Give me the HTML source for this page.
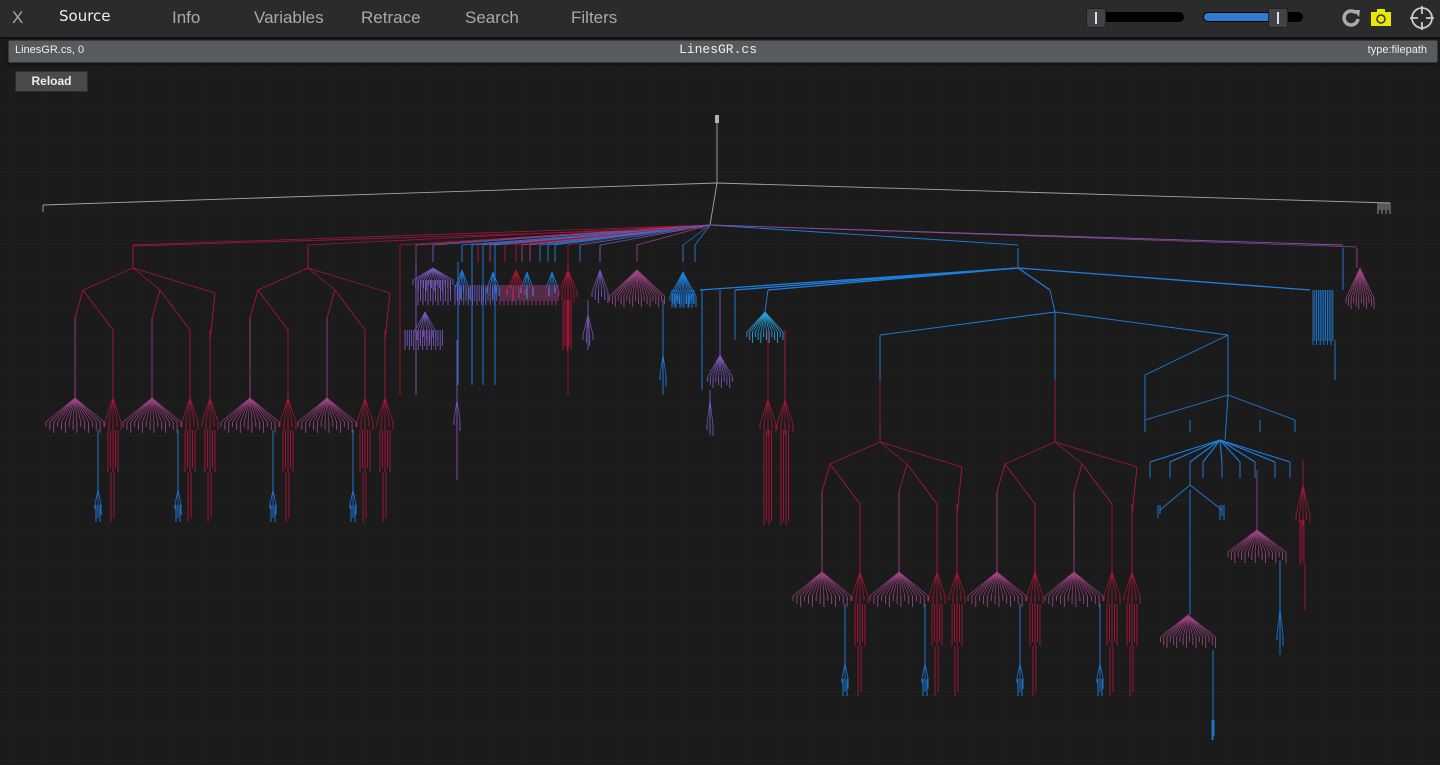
<!DOCTYPE html>
<html><head><meta charset="utf-8"><style>
html,body{margin:0;padding:0;width:1440px;height:765px;overflow:hidden;background:#1b1b1c;font-family:"Liberation Sans",sans-serif}
#hdr{position:absolute;left:0;top:0;width:1440px;height:37px;background:#2b2b2c;border-bottom:2px solid #111}
.t{position:absolute;top:8px;color:#a9a9a9;font-size:17px}
#bar{position:absolute;left:8px;top:40px;width:1428px;height:21px;background:#575a5e;border:1px solid #3a3a3a;border-radius:2px;box-shadow:0 2px 2px #111}
#bar span{position:absolute;top:3px;color:#eee;font-size:12px}
#rel{position:absolute;left:15px;top:71px;width:71px;height:19px;background:#4a4a4c;border:1px solid #2e2e2e;color:#eee;font-size:12px;font-weight:bold;text-align:center;line-height:19px}
svg{position:absolute;left:0;top:0}
#g{opacity:0.85}
</style></head><body>
<svg id="g" width="1440" height="765"></svg>
<div id="hdr">
<span class="t" style="left:12px">X</span>
<span class="t" style="left:59px;top:7px;color:#eee;font-size:15px;font-family:'DejaVu Sans',sans-serif">Source</span>
<span class="t" style="left:172px">Info</span>
<span class="t" style="left:254px">Variables</span>
<span class="t" style="left:361px">Retrace</span>
<span class="t" style="left:465px">Search</span>
<span class="t" style="left:571px">Filters</span>
<div style="position:absolute;left:1096px;top:12px;width:88px;height:10px;background:#000;border-radius:5px"></div>
<div style="position:absolute;left:1086px;top:8px;width:18px;height:18px;background:#3f4246;border:1px solid #222;border-radius:2px"><div style="margin:3px auto;width:2px;height:12px;background:#ddd"></div></div>
<div style="position:absolute;left:1203px;top:12px;width:100px;height:10px;background:#000;border-radius:5px"></div>
<div style="position:absolute;left:1204px;top:13px;width:70px;height:8px;background:#2e7bd0;border-radius:4px"></div>
<div style="position:absolute;left:1268px;top:8px;width:18px;height:18px;background:#3f4246;border:1px solid #222;border-radius:2px"><div style="margin:3px auto;width:2px;height:12px;background:#ddd"></div></div>
<svg style="left:1340px;top:7px" width="22" height="22" viewBox="0 0 22 22"><path d="M16 6 A7 7 0 1 0 18 12" fill="none" stroke="#aaa" stroke-width="3.5"/><path d="M13 3 L20 3 L19 10 Z" fill="#aaa"/></svg>
<svg style="left:1371px;top:9px" width="20" height="17" viewBox="0 0 20 17"><rect x="0" y="3" width="20" height="14" fill="#e8e800"/><rect x="6" y="0" width="8" height="4" fill="#e8e800"/><circle cx="10" cy="10" r="4" fill="none" stroke="#333" stroke-width="1.5"/></svg>
<svg style="left:1410px;top:6px" width="24" height="24" viewBox="0 0 24 24"><circle cx="12" cy="12" r="10" fill="none" stroke="#ccc" stroke-width="1.8"/><path d="M12 0V8M12 16V24M0 12H8M16 12H24" stroke="#ccc" stroke-width="1.8"/></svg>
</div>
<div id="bar"><span style="left:6px;font-size:11px">LinesGR.cs, 0</span><span style="left:670px;font-family:'Liberation Mono',monospace;font-size:13px;top:1px">LinesGR.cs</span><span style="right:10px;font-size:11px">type:filepath</span></div>
<div id="rel">Reload</div>
<script>
var s='';var R='#c4163c',P='#b04a92',B='#1e90ff',V='#8a62d6',G='#bbb';
function L(a,b,c,d,col,w){s+='<line x1="'+a+'" y1="'+b+'" x2="'+c+'" y2="'+d+'" stroke="'+col+'" stroke-width="'+(w||0.9)+'"/>';}
function F(x,y,w,h,col,n){n=n||14;for(var i=0;i<n;i++){var bx=x-w/2+w*i/(n-1);L(x,y,bx,y+h,col,0.7);L(bx,y+h,bx,y+h+5+(i%3)*3,col,0.9);}}
function Bd(x,y1,y2,n,col,sp){sp=sp||2;for(var i=0;i<n;i++)L(x+i*sp,y1,x+i*sp,y2-(i%2)*4,col,0.9);}
for(var x=12;x<1440;x+=32)L(x,66,x,765,'#202021',1);
for(var y=78;y<765;y+=32.5)L(0,y,1440,y,'#202021',1);
L(717,118,717,183,G);L(43,205,717,183,G);L(717,183,1390,203,G);L(43,205,43,212,G);Bd(1378,203,214,7,G,2);
L(717,183,710,225,G);s+='<rect x="715" y="115" width="4" height="8" fill="#ccc"/>';
var tops=[[133,R],[308,R],[400,R],[416,P],[433,V],[462,B],[472,B],[478,R],[483,B],[490,P],[495,B],[505,R],[516,R],[522,P],[530,P],[540,B],[548,B],[555,B],[568,R],[580,B],[600,V],[637,P],[683,B],[695,B]];
tops.forEach(function(t){L(710,225,t[0],245,t[1],0.7);L(t[0],245,t[0],262,t[1],0.9);});
L(133,246,710,228,R,0.7);L(710,225,1343,245,V,0.9);L(710,225,1018,245,B,0.9);L(710,225,1357,247,P,0.7);
function C(dx,dy){
 L(133+dx,248+dy,133+dx,268+dy,R);
 [[83,290],[160,290],[215,293]].forEach(function(p){L(133+dx,268+dy,p[0]+dx,p[1]+dy,R,0.7);});
 L(83+dx,290+dy,75+dx,318+dy,R);L(83+dx,290+dy,113+dx,330+dy,R);L(160+dx,290+dy,152+dx,318+dy,R);L(160+dx,290+dy,190+dx,330+dy,R);L(215+dx,293+dy,210+dx,340+dy,R);
 [75,152].forEach(function(x){L(x+dx,318+dy,x+dx,398+dy,P);F(x+dx,398+dy,58,24,P,16);});
 [113,190,210].forEach(function(x){L(x+dx,330+dy,x+dx,398+dy,R);F(x+dx,398+dy,16,24,R,5);Bd(x+dx-5,430+dy,472+dy,5,R,2.5);Bd(x+dx-2,472+dy,522+dy,2,R,3);});
 [98,178].forEach(function(x){L(x+dx,430+dy,x+dx,490+dy,B);F(x+dx,490+dy,6,14,B,3);Bd(x+dx-2,505+dy,522+dy,3,B,2);});
}
C(0,0);C(175,0);C(747,174);C(922,174);
F(433,268,40,12,V,16);Bd(418,280,305,14,V,2.5);F(425,312,22,20,V,8);Bd(405,330,350,18,V,2.2);
[400,416].forEach(function(x){L(x,262,x,395,x==400?R:V);});
F(462,270,14,18,B,6);F(493,272,12,16,B,5);F(527,272,12,16,B,5);F(552,272,12,16,B,5);F(516,270,18,20,R,7);F(568,270,18,22,R,7);F(600,270,16,22,V,6);
Bd(455,285,305,20,V,2.2);Bd(500,285,305,30,P,2);
L(568,262,568,395,R);Bd(563,300,350,5,R,2);F(588,315,10,20,V,4);L(588,300,588,350,V);
[458,472,483,495].forEach(function(x){L(x,262,x,385,B);});L(457,340,457,480,V);F(457,400,6,20,V,3);
F(637,270,55,26,P,20);F(683,272,26,24,B,12);Bd(672,290,308,12,B,2);
L(663,300,663,395,B);F(663,355,6,20,B,3);
L(1018,248,1018,268,B);[[700,290],[735,290],[768,290],[1050,290],[1310,290]].forEach(function(p){L(1018,268,p[0],p[1],B,1.3);});
L(702,290,702,390,B);L(735,290,735,340,B);L(768,290,765,312,B);F(765,312,36,20,'#2ab8ff',14);L(785,330,785,390,B);
F(720,355,25,22,V,10);L(720,290,720,355,V);F(710,400,6,25,V,3);L(710,390,710,435,V);
[768,785].forEach(function(x){L(x,330,x,400,R);F(x,400,16,24,R,5);Bd(x-4,430,525,4,R,2.5);});
L(1050,290,1055,312,B);[880,1055,1228].forEach(function(x){L(1055,312,x,335,B);});
L(880,335,880,380,B);L(880,380,880,442,R);L(1055,335,1055,380,B);L(1055,380,1055,442,R);
L(1228,335,1145,375,B);L(1228,335,1228,395,B);L(1145,375,1145,430,B);L(1228,395,1145,420,B);L(1228,395,1295,420,B);L(1228,395,1225,440,B);
[1145,1190,1260,1295].forEach(function(x){L(x,420,x,432,B);});
[1150,1170,1190,1203,1222,1240,1255,1275,1290].forEach(function(x){L(1220,440,x,462,B,1.1);L(x,462,x,478,B);});
L(1190,470,1190,485,B);L(1190,485,1160,510,B);L(1190,485,1222,510,B);Bd(1158,505,518,2,B,2);Bd(1220,505,520,3,B,2);
L(1190,490,1190,615,B);F(1188,615,55,22,P,18);L(1213,650,1213,740,B);Bd(1212,720,740,2,B,2);
L(1257,470,1257,530,P);F(1257,530,58,22,P,18);L(1280,560,1280,655,B);F(1280,610,6,25,B,3);
L(1303,460,1303,485,R);F(1303,485,14,30,R,5);Bd(1300,520,565,3,R,2);L(1305,565,1305,610,R);
L(1343,248,1343,290,B);Bd(1313,290,345,12,B,1.8);L(1335,340,1335,380,B);L(1357,248,1357,268,P);F(1360,268,28,30,P,12);
document.getElementById('g').innerHTML=s;
</script>
</body></html>
